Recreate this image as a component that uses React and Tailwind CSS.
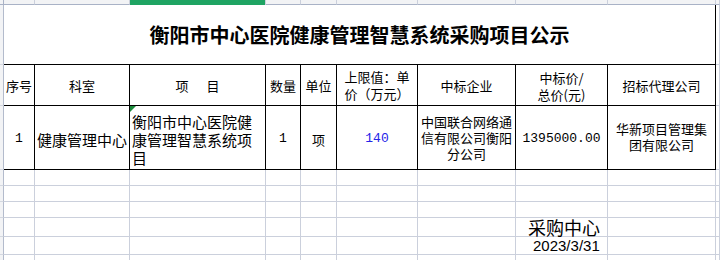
import React from "react";

// light spreadsheet gridline + the darker line under the column headers
const grid = "border-r border-b border-[#cbd0dc]";
const ink = "border-r border-b border-black";
const rowHead = "bg-[#f2f3f5] border-r border-b border-r-[#b3bbcc] border-b-[#d3d7e0]";
const colHead = "bg-[#f2f3f5] border-r border-b border-r-[#cbd0dc] border-b-[#a9b2c6]";

const center = "flex items-center justify-center text-center";

function EmptyRow() {
  return (
    <>
      <div className={rowHead} />
      {Array.from({ length: 10 }).map((_, i) => (
        <div key={i} className={grid} />
      ))}
    </>
  );
}

export default function App() {
  return (
    <div className="w-[720px] h-[260px] overflow-hidden bg-white text-black font-['Noto_Sans_CJK_SC',sans-serif]">
      <div className="grid grid-cols-[4px_31px_95px_136px_35px_36px_81px_98px_92px_108px_1fr] grid-rows-[5px_60px_41px_64px_16px_16px_16px_19px_18px_18px]">
        {/* column header strip */}
        <div className="bg-[#f2f3f5] border-r border-b border-[#a9b2c6]" />
        <div className={colHead} />
        <div className={colHead} />
        <div className="bg-[#1fa463] border-r border-[#cbd0dc]" />
        <div className={colHead} />
        <div className={colHead} />
        <div className={colHead} />
        <div className={colHead} />
        <div className={colHead} />
        <div className={colHead} />
        <div className={colHead} />

        {/* title */}
        <div className={rowHead} />
        <div className={`col-span-9 ${center} border-r border-b border-r-black border-b-black text-[20px] font-bold leading-none`}>
          衡阳市中心医院健康管理智慧系统采购项目公示
        </div>
        <div className={grid} />

        {/* header row */}
        <div className={rowHead} />
        <div className={`${ink} ${center} text-[13px] leading-none`}>序号</div>
        <div className={`${ink} ${center} text-[13px] leading-none`}>科室</div>
        <div className={`${ink} ${center} text-[13px] leading-none`}>
          项<span className="inline-block w-[18px]" />目
        </div>
        <div className={`${ink} ${center} text-[13px] leading-none`}>数量</div>
        <div className={`${ink} ${center} text-[13px] leading-none`}>单位</div>
        <div className={`${ink} ${center} text-[13px] leading-[17px]`}>
          上限值：单
          <br />
          价（万元）
        </div>
        <div className={`${ink} ${center} text-[13px] leading-none`}>中标企业</div>
        <div className={`${ink} ${center} text-[13px] leading-[17px] pt-[2px]`}>
          中标价/
          <br />
          总价(元)
        </div>
        <div className={`${ink} ${center} text-[13px] leading-none`}>招标代理公司</div>
        <div className={grid} />

        {/* data row */}
        <div className={rowHead} />
        <div className={`${ink} ${center} font-['Liberation_Mono',monospace] text-[13px] pt-[3px]`}>1</div>
        <div className={`${ink} ${center} text-[15px] leading-none pt-[3px]`}>健康管理中心</div>
        <div className={`${ink} relative flex items-center pl-[2px] pt-[4px] text-[15px] leading-[18px]`}>
          <span className="absolute top-0 left-0 w-0 h-0 border-t-[6px] border-t-[#1b8a3a] border-r-[6px] border-r-transparent" />
          <div>
            衡阳市中心医院健
            <br />
            康管理智慧系统项
            <br />
            目
          </div>
        </div>
        <div className={`${ink} ${center} font-['Liberation_Mono',monospace] text-[13px] pt-[3px]`}>1</div>
        <div className={`${ink} ${center} text-[13px] leading-none pt-[3px]`}>项</div>
        <div className={`${ink} ${center} font-['Liberation_Mono',monospace] text-[13px] text-[#2424e8] pt-[3px]`}>140</div>
        <div className={`${ink} ${center} text-[13px] leading-[16px]`}>
          中国联合网络通
          <br />
          信有限公司衡阳
          <br />
          分公司
        </div>
        <div className={`${ink} ${center} font-['Liberation_Mono',monospace] text-[13px] pt-[3px]`}>1395000.00</div>
        <div className={`${ink} ${center} text-[13px] leading-[16px] pb-[2px]`}>
          华新项目管理集
          <br />
          团有限公司
        </div>
        <div className={grid} />

        <EmptyRow />
        <EmptyRow />
        <EmptyRow />

        {/* signature */}
        <div className={rowHead} />
        {Array.from({ length: 7 }).map((_, i) => (
          <div key={i} className={grid} />
        ))}
        <div className={`${grid} flex items-center pl-[12px] whitespace-nowrap text-[18px] leading-none`}>采购中心</div>
        <div className={grid} />
        <div className={grid} />

        <div className={rowHead} />
        {Array.from({ length: 7 }).map((_, i) => (
          <div key={i} className={grid} />
        ))}
        <div className={`${grid} flex items-center pl-[17px] whitespace-nowrap font-['Liberation_Sans',sans-serif] text-[15px] leading-none`}>
          2023/3/31
        </div>
        <div className={grid} />
        <div className={grid} />

        <EmptyRow />
      </div>
    </div>
  );
}
